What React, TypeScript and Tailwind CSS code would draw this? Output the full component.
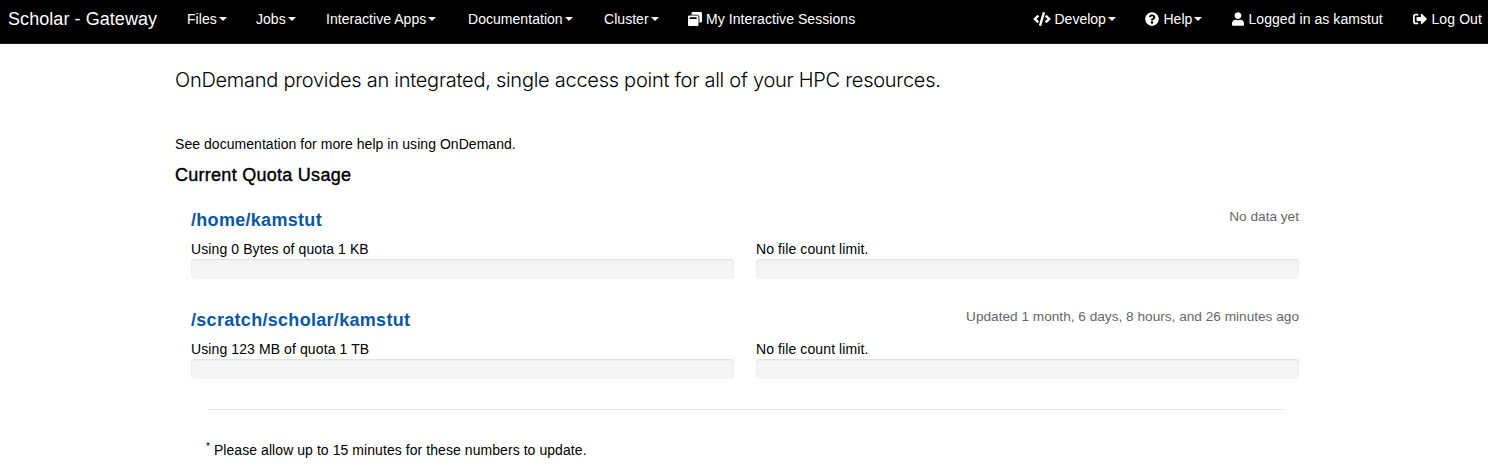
import React from "react";
import { FaCode, FaQuestionCircle, FaUser, FaSignOutAlt, FaWindowRestore } from "react-icons/fa";

const menus = [
  { label: "Files", box: "w-[69px]" },
  { label: "Jobs", box: "w-[70px]" },
  { label: "Interactive Apps", box: "w-[142px]" },
  { label: "Documentation", box: "w-[136px]" },
  { label: "Cluster", box: "w-[84px]" },
];

function Caret() {
  return <span className="ml-0.5 h-0 w-0 shrink-0 border-x-4 border-t-4 border-x-transparent border-t-white" />;
}

function Bar() {
  return <div className="h-5 rounded bg-[#f5f5f5] shadow-[inset_0_1px_2px_rgba(0,0,0,0.1)]" />;
}

type QuotaProps = { path: string; status: string; usage: string };

function Quota({ path, status, usage }: QuotaProps) {
  return (
    <section className="h-[100px]">
      <div className="flex h-[35px] justify-between">
        <h4 className="pt-px text-[18px] leading-[28px] font-bold tracking-[0.3px] text-[#0a58a5]">{path}</h4>
        <span className="text-[13.65px] leading-[23px] text-[#666]">{status}</span>
      </div>
      <div className="grid grid-cols-2 gap-[22px] text-[14px] leading-[19px] tracking-[0.1px]">
        <div>
          <p>{usage}</p>
          <Bar />
        </div>
        <div>
          <p>No file count limit.</p>
          <Bar />
        </div>
      </div>
    </section>
  );
}

export default function App() {
  return (
    <div className="h-[471px] w-full overflow-hidden bg-white font-['Liberation_Sans',sans-serif] text-black">
      <nav className="flex h-[44px] items-center border-b border-[#222] bg-black pr-1.5 pb-[5px] pl-2 text-[14px] whitespace-nowrap text-white">
        <span className="w-[179px] text-[18px] tracking-[0.06px]">Scholar - Gateway</span>
        {menus.map((m) => (
          <span key={m.label} className={"flex items-center tracking-[0.04px] " + m.box}>
            {m.label}
            <Caret />
          </span>
        ))}
        <span className="flex items-center gap-1 tracking-[0.06px]">
          <FaWindowRestore />
          My Interactive Sessions
        </span>
        <div className="ml-auto flex items-center">
          <span className="flex w-[112px] items-center">
            <FaCode className="mr-[3px] h-[14px] w-[18px]" />
            Develop
            <Caret />
          </span>
          <span className="flex w-[87px] items-center">
            <FaQuestionCircle className="mr-1" />
            Help
            <Caret />
          </span>
          <span className="flex w-[181px] items-center tracking-[0.06px]">
            <FaUser className="mr-1 h-[14px] w-[12px]" />
            Logged in as kamstut
          </span>
          <span className="flex items-center tracking-[0.1px]">
            <FaSignOutAlt className="mr-1" />
            Log Out
          </span>
        </div>
      </nav>
      <main className="mx-[173px] px-0.5">
        <p className="pt-[21px] font-['Inter',sans-serif] text-[20px] leading-[30px] font-light tracking-[-0.265px] whitespace-nowrap">
          OnDemand provides an integrated, single access point for all of your HPC resources.
        </p>
        <p className="mt-[39px] text-[14px] leading-[20px] tracking-[0.045px]">See documentation for more help in using OnDemand.</p>
        <h3 className="mt-[9px] text-[18px] leading-[24px] tracking-[0.27px] [-webkit-text-stroke:0.4px_black]">Current Quota Usage</h3>
        <div className="mt-[18px] mr-[14px] ml-4">
          <Quota path="/home/kamstut" status="No data yet" usage="Using 0 Bytes of quota 1 KB" />
          <Quota
            path="/scratch/scholar/kamstut"
            status="Updated 1 month, 6 days, 8 hours, and 26 minutes ago"
            usage="Using 123 MB of quota 1 TB"
          />
          <hr className="mt-[4px] mr-[15px] ml-[17px] border-[#e8e8e8]" />
          <p className="mt-[30px] ml-[15px] text-[14px] leading-[20px] tracking-[0.065px]">
            <sup className="text-[10px]">*</sup> Please allow up to 15 minutes for these numbers to update.
          </p>
        </div>
      </main>
    </div>
  );
}
